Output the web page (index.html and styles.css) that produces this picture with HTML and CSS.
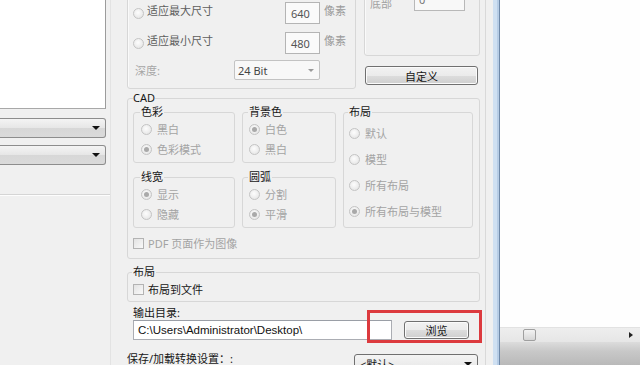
FILE: index.html
```html
<!DOCTYPE html>
<html lang="zh-CN">
<head>
<meta charset="utf-8">
<title>转换设置</title>
<link rel="stylesheet" href="styles.css">
</head>
<body>
<div class="screen">
  <aside class="left">
    <div class="preview"></div>
    <div class="combo"><span class="carr"></span></div>
    <div class="combo"><span class="carr"></span></div>
    <div class="sep"></div>
  </aside>

  <main class="main">
    <div class="toprow">
      <div class="gb size">
        <div class="srow">
          <span class="radio"></span><span class="slbl">适应最大尺寸</span>
          <span class="num">640</span><span class="unit">像素</span>
        </div>
        <div class="srow r2">
          <span class="radio"></span><span class="slbl">适应最小尺寸</span>
          <span class="num">480</span><span class="unit">像素</span>
        </div>
        <div class="srow r3">
          <span class="dlbl">深度:</span>
          <span class="dsel">24 Bit<span class="darr"></span></span>
        </div>
      </div>
      <div class="rcol">
        <div class="gb margins">
          <div class="mrow"><span class="mlbl">底部</span><span class="minput">0</span></div>
        </div>
        <div class="btn custom">自定义</div>
      </div>
    </div>

    <fieldset class="fs cad">
      <legend class="lg-cad">CAD</legend>
      <div class="cadgrid">
        <div class="col">
          <fieldset class="fs sub">
            <legend>色彩</legend>
            <div class="opt"><span class="radio"></span>黑白</div>
            <div class="opt"><span class="radio on"></span>色彩模式</div>
          </fieldset>
          <fieldset class="fs sub second">
            <legend>线宽</legend>
            <div class="opt"><span class="radio on"></span>显示</div>
            <div class="opt"><span class="radio"></span>隐藏</div>
          </fieldset>
        </div>
        <div class="col">
          <fieldset class="fs sub">
            <legend>背景色</legend>
            <div class="opt"><span class="radio on"></span>白色</div>
            <div class="opt"><span class="radio"></span>黑白</div>
          </fieldset>
          <fieldset class="fs sub second">
            <legend>圆弧</legend>
            <div class="opt"><span class="radio"></span>分割</div>
            <div class="opt"><span class="radio on"></span>平滑</div>
          </fieldset>
        </div>
        <fieldset class="fs sub layout">
          <legend>布局</legend>
          <div class="opt tall"><span class="radio"></span>默认</div>
          <div class="opt tall"><span class="radio"></span>模型</div>
          <div class="opt tall"><span class="radio"></span>所有布局</div>
          <div class="opt tall"><span class="radio on"></span>所有布局与模型</div>
        </fieldset>
      </div>
      <div class="chk dis"><span class="box"></span>PDF 页面作为图像</div>
    </fieldset>

    <fieldset class="fs lay">
      <legend>布局</legend>
      <div class="chk"><span class="box"></span>布局到文件</div>
    </fieldset>

    <section class="output">
      <div class="olbl">输出目录:</div>
      <div class="orow">
        <div class="path">C:\Users\Administrator\Desktop\</div>
        <div class="btn browse">浏览</div>
      </div>
      <div class="mark"></div>
    </section>

    <div class="saverow">
      <span class="savelbl">保存/加载转换设置：:</span>
      <span class="preset">&lt;默认&gt;<span class="parr"></span></span>
    </div>
  </main>

  <div class="frame"></div>

  <div class="rightpane">
    <div class="canvas"></div>
    <div class="hscroll">
      <span class="thumb"></span>
      <span class="sarr"></span>
    </div>
    <div class="band"></div>
  </div>
</div>
</body>
</html>
```

FILE: styles.css
```css
html, body {
  margin: 0;
  padding: 0;
}
body {
  width: 640px;
  height: 365px;
  overflow: hidden;
  background: #f0f0f0;
  font-family: "Noto Sans", "Noto Sans CJK SC", sans-serif;
  font-size: 11px;
  color: #161616;
}
.screen {
  display: flex;
  width: 640px;
  height: 365px;
  overflow: hidden;
}

/* left column */
.left {
  width: 111px;
  flex: none;
  box-sizing: border-box;
  border-right: 1px solid #e3e3e3;
}
.preview {
  width: 106px;
  height: 109px;
  box-sizing: border-box;
  background: #fff;
  border-right: 1px solid #9c9c9c;
  border-bottom: 1px solid #a8a8a8;
}
.combo {
  width: 106px;
  height: 20px;
  margin-top: 9px;
  box-sizing: border-box;
  border: 1px solid #8d8d8d;
  border-left: none;
  border-radius: 0 3px 3px 0;
  background: linear-gradient(#f4f4f4, #e6e6e6 50%, #d7d7d7 51%, #dadada);
  display: flex;
  justify-content: flex-end;
  align-items: center;
  padding-right: 5px;
}
.combo + .combo { margin-top: 7px; }
.carr {
  width: 0;
  height: 0;
  border-left: 4px solid transparent;
  border-right: 4px solid transparent;
  border-top: 4px solid #111;
}
.sep {
  margin-top: 29px;
  width: 110px;
  border-top: 1px solid #d5d5d5;
  border-bottom: 1px solid #fdfdfd;
}

/* main column */
.main {
  width: 375px;
  flex: none;
  box-sizing: border-box;
  padding: 0 5px 0 16px;
  border-right: 1px solid #d9d9d9;
  display: flex;
  flex-direction: column;
}
.gb {
  box-sizing: border-box;
  border: 1px solid #d7d7d7;
  border-radius: 3px;
  box-shadow: inset 1px 1px 0 #fafafa;
}
.toprow {
  display: flex;
  gap: 8px;
  margin-top: -13px;
  align-items: flex-start;
}
.size {
  width: 229px;
  padding: 14px 0 8px 5px;
}
.srow {
  display: flex;
  align-items: center;
  height: 22px;
}
.srow.r2 { margin-top: 8px; }
.srow.r3 { margin-top: 6px; height: 20px; }
.slbl {
  width: 138px;
  color: #5e5e5e;
  line-height: 18px;
  align-self: flex-start;
}
.num {
  width: 35px;
  height: 22px;
  box-sizing: border-box;
  border: 1px solid #b4b4b4;
  background: #fafafa;
  color: #555;
  padding-left: 5px;
  line-height: 21px;
}
.unit {
  margin-left: 4px;
  color: #9a9a9a;
  align-self: flex-start;
  line-height: 18px;
}
.dlbl {
  width: 99px;
  padding-left: 2px;
  color: #a6a6a6;
}
.dsel {
  width: 86px;
  height: 20px;
  box-sizing: border-box;
  border: 1px solid #c3c3c3;
  border-radius: 2px;
  background: #f8f8f8;
  color: #444;
  padding-left: 3px;
  display: flex;
  align-items: center;
  justify-content: space-between;
  padding-right: 5px;
}
.darr {
  width: 0;
  height: 0;
  border-left: 3px solid transparent;
  border-right: 3px solid transparent;
  border-top: 3px solid #9a9a9a;
}
.rcol {
  width: 116px;
  display: flex;
  flex-direction: column;
}
.margins {
  height: 69px;
  padding: 0 0 0 5px;
}
.mrow {
  display: flex;
  align-items: flex-end;
  height: 23px;
}
.mlbl {
  width: 44px;
  color: #a0a0a0;
  line-height: 14px;
}
.minput {
  width: 51px;
  height: 22px;
  box-sizing: border-box;
  border: 1px solid #b8b8b8;
  background: #f8f8f8;
  color: #777;
  padding-left: 4px;
  line-height: 20px;
}
.btn {
  box-sizing: border-box;
  border: 1px solid #707070;
  border-radius: 3px;
  background: linear-gradient(#f2f2f2, #ebebeb 50%, #dddddd 51%, #cfcfcf);
  box-shadow: inset 0 0 0 1px #fbfbfb;
  display: flex;
  align-items: center;
  justify-content: center;
  color: #161616;
}
.custom {
  margin-top: 10px;
  margin-left: 1px;
  width: 113px;
  height: 19px;
}

/* fieldsets */
.fs {
  margin: 0;
  min-width: 0;
  box-sizing: border-box;
  border: 1px solid #d7d7d7;
  border-radius: 3px;
}
.fs legend {
  padding: 0 1px;
  margin-left: -1px;
  line-height: 14px;
  color: #161616;
}
.cad {
  margin-top: 2px;
  padding: 0 6px 5px 5px;
}
.cad .lg-cad {
  padding: 0;
  margin-left: 0;
  line-height: 14px;
}
.cadgrid {
  display: grid;
  grid-template-columns: 102px 94px 130px;
  column-gap: 7px;
}
.col {
  display: flex;
  flex-direction: column;
}
.sub {
  padding: 0 4px 3px 7px;
}
.cadgrid .col:nth-child(2) .sub { padding-left: 6px; }
.sub.second { margin-top: 7px; }
.layout {
  padding: 1px 4px 3px 5px;
}
.opt {
  display: flex;
  align-items: center;
  height: 20px;
  color: #a3a3a3;
  white-space: nowrap;
}
.opt.tall { height: 26px; }
.radio {
  flex: none;
  position: relative;
  width: 11px;
  height: 11px;
  box-sizing: border-box;
  border-radius: 50%;
  border: 1px solid #c4c4c4;
  background: radial-gradient(circle at 45% 40%, #fdfdfd, #ececec 60%, #dedede);
  margin-right: 5px;
}
.srow .radio { margin-right: 3px; margin-top: 1px; }
.radio.on::after {
  content: "";
  position: absolute;
  left: 2px;
  top: 2px;
  width: 5px;
  height: 5px;
  border-radius: 50%;
  background: #a9a9a9;
}
.chk {
  display: flex;
  align-items: center;
  height: 20px;
  margin-top: 5px;
  color: #161616;
}
.chk.dis { color: #a3a3a3; }
.box {
  flex: none;
  width: 11px;
  height: 11px;
  box-sizing: border-box;
  border: 1px solid #b3b3b3;
  background: linear-gradient(135deg, #e3e3e3, #f9f9f9);
  margin-right: 4px;
}
.lay {
  margin-top: 5px;
  padding: 0 6px 3px 5px;
}
.lay legend { line-height: 16px; }
.lay .chk { margin-top: 0; height: 18px; }

/* output */
.output {
  position: relative;
  margin-top: 3px;
  padding-left: 6px;
}
.olbl {
  line-height: 15px;
}
.orow {
  display: flex;
  align-items: flex-start;
}
.path {
  width: 259px;
  height: 20px;
  box-sizing: border-box;
  border: 1px solid #abadb3;
  border-top-color: #9a9ea6;
  background: #fff;
  padding-left: 4px;
  line-height: 18px;
  font-family: "Liberation Sans", Arial, sans-serif;
  font-size: 11.5px;
  color: #111;
}
.browse {
  margin-left: 12px;
  margin-top: 1px;
  width: 65px;
  height: 18px;
}
.mark {
  position: absolute;
  left: 240px;
  top: 5px;
  width: 115px;
  height: 33px;
  box-sizing: border-box;
  border: 3px solid #dc3a3e;
}
.saverow {
  display: flex;
  align-items: flex-start;
  margin-top: 10px;
}
.savelbl {
  width: 227px;
  line-height: 16px;
  margin-top: 1px;
}
.preset {
  width: 124px;
  height: 20px;
  margin-top: 4px;
  box-sizing: border-box;
  border: 1px solid #707070;
  border-radius: 3px;
  background: linear-gradient(#f4f4f4, #e4e4e4);
  display: flex;
  align-items: center;
  justify-content: space-between;
  padding: 0 5px 0 5px;
}
.parr {
  width: 0;
  height: 0;
  border-left: 4px solid transparent;
  border-right: 4px solid transparent;
  border-top: 4px solid #111;
}

/* window frame and right pane */
.frame {
  width: 14px;
  flex: none;
  background: linear-gradient(to right, #f0f0f0 0 7px, #cfe0f2 7px 11px, #b7cde6 11px 13px, #6f89a9 13px 14px);
}
.rightpane {
  flex: 1;
  display: flex;
  flex-direction: column;
  background: #fff;
}
.canvas {
  flex: 1;
  background: #fefefe;
}
.hscroll {
  height: 14px;
  flex: none;
  display: flex;
  align-items: center;
  justify-content: space-between;
  padding: 0 7px 0 23px;
  background: linear-gradient(#eeeeee, #e6e6e6);
  border-top: 1px solid #e2e2e2;
}
.thumb {
  width: 13px;
  height: 12px;
  box-sizing: border-box;
  border: 1px solid #9f9f9f;
  border-radius: 2px;
  background: linear-gradient(#f3f3f3, #d6d6d6);
}
.sarr {
  width: 0;
  height: 0;
  border-top: 3px solid transparent;
  border-bottom: 3px solid transparent;
  border-left: 4px solid #222;
}
.band {
  height: 23px;
  flex: none;
  background: linear-gradient(#dcdcdc, #c8c8c8 40%, #b9b9b9);
}
```
